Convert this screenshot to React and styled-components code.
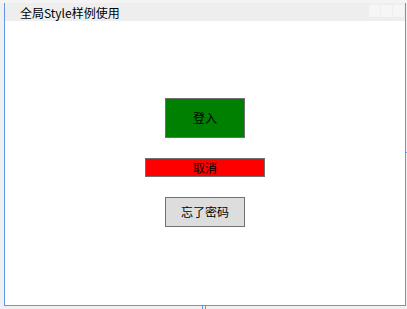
import React from 'react'
import styled, { createGlobalStyle } from 'styled-components'

const GlobalStyle = createGlobalStyle`
  html, body {
    margin: 0;
    padding: 0;
    background: #f0f0f0;
    overflow: hidden;
  }
  body {
    font-family: "Noto Sans CJK SC", "Liberation Sans", sans-serif;
  }
`

const Stage = styled.div`
  width: 407px;
  height: 309px;
  padding: 3px 0 0 4px;
  box-sizing: border-box;
  background: #f0f0f0;
  position: relative;
`

const TopStrip = styled.div`
  position: absolute;
  left: 0;
  top: 0;
  width: 407px;
  height: 3px;
  background: #f4f4f4;
`

const Window = styled.div`
  position: relative;
  width: 402px;
  box-sizing: border-box;
  border-left: 1px solid #6495ed;
  border-right: 1px solid #6495ed;
  border-bottom: 1px solid #6495ed;

  &::after {
    content: '';
    position: absolute;
    right: -3px;
    top: 149px;
    width: 3px;
    height: 1px;
    background: #6495ed;
  }
`

const TitleBar = styled.div`
  height: 18px;
  background: #eeeeee;
  display: flex;
  align-items: center;
  justify-content: space-between;
  padding-left: 15px;
  padding-right: 1px;
`

const Title = styled.span`
  font-size: 12px;
  line-height: 17px;
  color: #000;
  font-family: "Noto Sans CJK SC", "Liberation Sans", sans-serif;
`

const Controls = styled.div`
  display: flex;
  gap: 1px;
  align-self: flex-start;
  margin-top: 2px;
`

const Ctrl = styled.div`
  width: 11px;
  height: 12px;
  background: #f6f6f6;
`

const Canvas = styled.div`
  height: 284px;
  background: #ffffff;
  display: flex;
  flex-direction: column;
  align-items: center;
  padding-top: 77px;
  box-sizing: border-box;
  gap: 20px;
`

const Btn = styled.button`
  width: ${p => p.$w}px;
  height: ${p => p.$h}px;
  background: ${p => p.$bg};
  border: 1px solid #707070;
  margin: 0;
  padding: 0;
  font-family: "Noto Sans CJK SC", "Liberation Sans", sans-serif;
  font-size: 12px;
  color: #000;
  line-height: 1;
  display: flex;
  align-items: center;
  justify-content: center;
  box-sizing: border-box;
`

const Ticks = styled.div`
  display: flex;
  gap: 2px;
  margin-left: 198px;
  height: 3px;
`

const Tick = styled.div`
  width: 1px;
  height: 3px;
  background: #6495ed;
`

export default function App() {
  return (
    <>
      <GlobalStyle />
      <Stage>
        <TopStrip />
        <Window>
          <TitleBar>
            <Title>全局Style样例使用</Title>
            <Controls>
              <Ctrl />
              <Ctrl />
              <Ctrl />
            </Controls>
          </TitleBar>
          <Canvas>
            <Btn $w={80} $h={40} $bg="#008000">登入</Btn>
            <Btn $w={120} $h={19} $bg="#ff0000">取消</Btn>
            <Btn $w={80} $h={30} $bg="#dddddd">忘了密码</Btn>
          </Canvas>
        </Window>
        <Ticks>
          <Tick />
          <Tick />
        </Ticks>
      </Stage>
    </>
  )
}
